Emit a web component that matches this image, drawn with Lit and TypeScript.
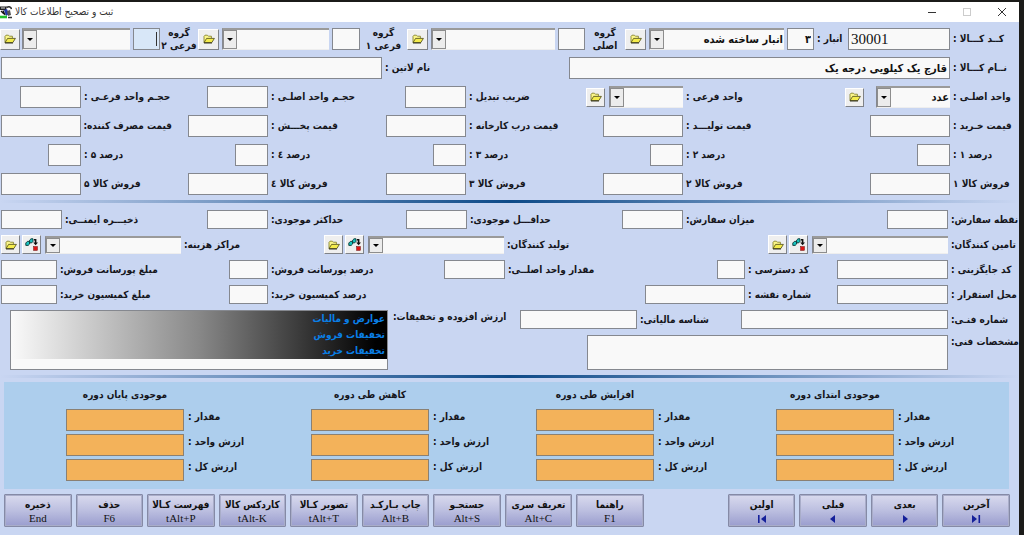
import { LitElement, html, css, svg } from "lit";
import { customElement } from "lit/decorators.js";

const folderIcon = html`<svg class="icon" viewBox="0 0 12 10" aria-hidden="true">
  ${svg`<path d="M1 8.5V2.2L2 1.2H4.4L5.4 2.2H8.4V4" fill="#fbf68a" stroke="#7c7a22" stroke-width=".8"/>
  <path d="M1 8.6L3.6 4.4H11.4L8.8 8.6Z" fill="#f4ec4c" stroke="#4c4a14" stroke-width=".8"/>
  <path d="M1 9H9" stroke="#1c1c08" stroke-width=".8"/>`}
</svg>`;

const treeIcon = html`<svg class="icon wide" viewBox="0 0 13 13" aria-hidden="true">
  ${svg`<path d="M.8 5L2.4 3.4H4.6V6L3.2 7.4H.8Z" fill="#19c5c0" stroke="#0a3634" stroke-width=".9"/>
  <path d="M4.6 2.2L6 .8H8V3.4L6.8 4.8H4.6Z" fill="#19c5c0" stroke="#0a3634" stroke-width=".9"/>
  <path d="M9 1.8H10.6V5" fill="none" stroke="#111" stroke-width="1.6"/>
  <path d="M8.2 4.4H13L10.6 7.2Z" fill="#111"/>
  <rect x="8.6" y="8.6" width="3.8" height="3.8" fill="#e01616" stroke="#6b0a0a" stroke-width=".5"/>`}
</svg>`;

const appIcon = html`<svg class="app-icon" viewBox="0 0 12 13" aria-hidden="true">
  ${svg`<path d="M0 .5H7L6 4H0Z" fill="#222"/><path d="M1 2H5" stroke="#ddd"/>
  <path d="M4 4L7 3L9 8L6 10Z" fill="#2438a8"/><path d="M7 1.5C9 0 11 1 11.5 3" fill="none" stroke="#333" stroke-width="1.6"/>
  <path d="M7 5L10 4L11 9L8 10Z" fill="#555"/><path d="M1 5L4 8M3 4.6L5 9" stroke="#111" stroke-width="1.3"/>
  <path d="M0 11H7" stroke="#21c02c" stroke-width="2.6"/><path d="M8 11.5H12" stroke="#333" stroke-width="1.5"/>`}
</svg>`;

const navGlyph: Record<string, unknown> = {
  last: svg`<path d="M1 1L6 5L1 9Z"/><rect x="7.5" y="1" width="1.6" height="8"/>`,
  next: svg`<path d="M3 1L8 5L3 9Z"/>`,
  prev: svg`<path d="M7 1L2 5L7 9Z"/>`,
  first: svg`<path d="M9 1L4 5L9 9Z"/><rect x="1" y="1" width="1.6" height="8"/>`,
};

const NAV = [
  ["آخرین", "last"],
  ["بعدی", "next"],
  ["قبلی", "prev"],
  ["اولین", "first"],
];

const ACTIONS = [
  ["راهنما", "F1"],
  ["تعریف سری", "Alt+C"],
  ["جستجـو", "Alt+S"],
  ["چاپ بـارکـد", "Alt+B"],
  ["تصویر کـالا", "tAlt+T"],
  ["کاردکس کالا", "tAlt-K"],
  ["فهرست کـالا", "tAlt+P"],
  ["حذف", "F6"],
  ["ذخیره", "End"],
];

const STOCK = ["موجودی ابتدای دوره", "افزایش طی دوره", "کاهش طی دوره", "موجودی پایان دوره"];
const MEASURES = ["مقدار :", "ارزش واحد :", "ارزش کل :"];

@customElement("app-root")
export class AppRoot extends LitElement {
  static styles = css`
    :host {
      display: block;
      box-sizing: border-box;
      min-height: 100vh;
      padding: 2px 5px 0 0;
      background: #1b1b19;
      font-family: "DejaVu Sans Condensed", "DejaVu Sans", sans-serif;
      font-size: 10px;
      font-weight: 700;
      line-height: 14px;
      color: #16161c;
    }
    *, *::before, *::after { box-sizing: border-box; }
    .window {
      direction: rtl;
      display: flex;
      flex-direction: column;
      min-height: calc(100vh - 2px);
      background: #c9d6f2;
    }
    .titlebar {
      direction: ltr;
      display: flex;
      align-items: center;
      height: 20px;
      background: #fff;
      font-weight: 400;
      color: #333;
    }
    .app-icon { width: 12px; height: 13px; margin-right: 3px; }
    .title { flex: 1; margin: 0; font: inherit; text-align: left; }
    .caption {
      width: 35px;
      height: 20px;
      padding: 0;
      border: 0;
      background: none;
    }
    .caption svg { display: block; margin: auto; width: 10px; height: 10px; fill: none; stroke: #333; }
    .caption:disabled svg { stroke: #ccc; }

    form { display: flex; flex-direction: column; flex: 1; }
    .section { display: flex; flex-direction: column; gap: 7px; padding-top: 6px; }
    .section.dense { gap: 6px; padding-top: 7px; }
    .row { display: grid; align-items: center; min-height: 22px; }
    .dense .row { min-height: 19px; }
    .identity { grid-template-columns: 69fr 102fr 34fr 27fr 138fr 24fr 40fr 27fr 127fr 24fr 47fr 28fr 110fr 24fr 38fr 27fr 111fr 22fr; }
    .names { grid-template-columns: 69fr 381fr 187fr 381fr 1fr; }
    .five { grid-template-columns: 69fr 180fr 87fr 123fr 94fr 98fr 100fr 96fr 91fr 81fr; }
    .order { grid-template-columns: 71fr 61fr 204fr 61fr 155fr 61fr 138fr 61fr 145fr 61fr 1fr; }
    .partners { grid-template-columns: 71fr 180fr 264fr 180fr 143fr 181fr; }
    .codes { grid-template-columns: 71fr 111fr 92fr 28fr 212fr 61fr 176fr 39fr 172fr 56fr 1fr; }
    .places { grid-template-columns: 71fr 111fr 92fr 100fr 377fr 39fr 172fr 56fr 1fr; }
    .row > *, .pair > * { min-width: 0; }

    label, .caption-text { display: block; text-align: left; padding-left: 3px; white-space: nowrap; }
    .stacked { text-align: center; padding: 0; margin: -2px 0; line-height: 13px; }
    input, textarea, select {
      display: block;
      width: 100%;
      height: 22px;
      margin: 0;
      padding: 0 2px;
      border: 1px solid #85888f;
      border-radius: 0;
      outline: 0;
      background: #f9f9f9;
      font: inherit;
      font-size: 11px;
      color: #111;
    }
    .dense input { height: 19px; }
    .w33 { width: 33px; }
    .w61 { width: 61px; }
    .w80 { width: 80px; }
    .code { direction: ltr; font-family: "Liberation Serif", serif; font-weight: 400; font-size: 15px; }
    .current { background: linear-gradient(#333, #333) calc(100% - 2px) 3px / 1px 14px no-repeat #d8e7f8; }

    .combo { position: relative; display: block; flex: none; }
    .row > .combo { margin-right: 3px; }
    .combo select {
      appearance: none;
      padding: 0 1px 0 16px;
      border: 0;
      border-top: 2px solid #9a9a9a;
      border-left: 1px solid #85888f;
      border-bottom: 1px solid #eee;
    }
    .combo::after {
      content: "";
      position: absolute;
      left: 1px;
      top: 2px;
      bottom: 1px;
      width: 14px;
      pointer-events: none;
      border: 1px solid #8d8d8d;
      background: url('data:image/svg+xml,<svg xmlns="http://www.w3.org/2000/svg" viewBox="0 0 6 3"><path d="M0 0H6L3 3Z"/></svg>') 50% 50% / 6px 3px no-repeat #ececec;
    }
    .dense .combo select { height: 18px; }
    .unit { width: 74px; }
    .partner { width: 136px; }
    .pair { display: flex; align-items: center; gap: 2px; }
    .pair .combo { margin-left: 2px; }
    .pair.loose .combo { margin-left: 10px; }
    .tool {
      display: grid;
      place-items: center;
      flex: none;
      width: 19px;
      height: 19px;
      padding: 0;
      border: 1px solid;
      border-color: #fff #7f8288 #7f8288 #fff;
      background: #efefef;
    }
    .identity .tool { width: 21px; height: 21px; justify-self: end; }
    .identity .tool:last-child { justify-self: start; margin-right: 2px; width: 20px; }
    .icon { display: block; width: 12px; height: 10px; }
    .icon.wide { width: 13px; height: 13px; }

    .rule {
      height: 3px;
      margin: 5px 0 0;
      border: 0;
      background: linear-gradient(90deg, transparent, #0d4a88 50%, transparent);
    }
    .technical { display: grid; grid-template-columns: 499fr 132fr 378fr 10fr; }
    .technical > * { min-width: 0; }
    .details { display: flex; flex-direction: column; gap: 6px; }
    .numbers { grid-template-columns: 71fr 207fr 104fr 117fr; }
    .spec { grid-template-columns: 71fr 361fr 67fr; align-items: start; }
    textarea { height: 35px; resize: none; }
    .adjust { padding-left: 5px; }
    .list {
      margin: 0;
      padding: 0;
      border: 1px solid #85888f;
      background: #f9f9f9;
      list-style: none;
    }
    .list li {
      height: 16px;
      padding: 0 2px;
      line-height: 16px;
      color: #0a7fe6;
      background: linear-gradient(90deg, #fafafa, #888 50%, #000 97%);
    }

    .stock {
      display: grid;
      grid-template-columns: 115fr 118fr 122fr 118fr 107fr 118fr 127fr 118fr 62fr;
      grid-template-rows: 20px repeat(3, 22px);
      row-gap: 3px;
      margin: 4px 10px 0 4px;
      padding: 4px 0 8px;
      background: #adceed;
    }
    .stock > * { min-width: 0; }
    .stock h2 { margin: 0; font: inherit; text-align: center; line-height: 18px; white-space: nowrap; }
    .stock label { padding: 1px 0 0 4px; }
    .stock input { background: #f3b25a; border-color: #8a8073; }

    .actions { display: flex; gap: 4px; padding: 5px 9px 6px 4px; }
    .action {
      display: flex;
      flex-direction: column;
      align-items: center;
      justify-content: center;
      flex: 67 1 0;
      min-width: 0;
      height: 33px;
      padding: 0;
      border: 1px solid #858aa6;
      border-radius: 1px;
      box-shadow: inset 0 0 0 1px #a9adc9;
      background: linear-gradient(#d9daee, #bcbfe0 50%, #9a9dce);
      font: inherit;
      color: #111;
      white-space: nowrap;
    }
    .gap { flex: 78 1 0; }
    .key { direction: ltr; font-family: "Liberation Serif", serif; font-size: 11px; font-weight: 400; line-height: 12px; }
    .nav { width: 10px; height: 10px; margin-top: 2px; fill: #15209a; }
  `;

  private text(id: string, label: string, size = "") {
    return html`<label for=${id}>${label}</label><input id=${id} class=${size}>`;
  }

  private combo(id: string, name: string, size = "", value = "") {
    return html`<span class="combo ${size}"><select id=${id} aria-label=${name}><option>${value}</option></select></span>`;
  }

  private tool(name: string, icon = folderIcon) {
    return html`<button type="button" class="tool" aria-label=${name}>${icon}</button>`;
  }

  private group(id: string, first: string, second: string, current = false) {
    return html`
      <label class="stacked" for=${id}>${first}<br>${second}</label>
      <input id=${id} class=${current ? "current" : ""}>
      ${this.combo(id + "-list", `${first} ${second}`)}
      ${this.tool("انتخاب")}`;
  }

  private partner(id: string, label: string) {
    return html`<label for=${id}>${label}</label>
      <span class="pair">${this.combo(id, label, "partner")}${this.tool("افزودن", treeIcon)}${this.tool("انتخاب")}</span>`;
  }

  private series(prefix: string, labels: string[], size: string, tracks = "five") {
    return html`<div class="row ${tracks}">${labels.map((l, i) => this.text(prefix + i, l, size))}</div>`;
  }

  render() {
    return html`<main class="window">
      <header class="titlebar">
        ${appIcon}
        <h1 class="title" dir="rtl">ثبت و تصحیح اطلاعات کالا</h1>
        <button class="caption" aria-label="کوچک کردن"><svg viewBox="0 0 10 10"><path d="M1 5.5H9"/></svg></button>
        <button class="caption" aria-label="بزرگ کردن" disabled><svg viewBox="0 0 10 10"><rect x="1.5" y="1.5" width="7" height="7"/></svg></button>
        <button class="caption" aria-label="بستن"><svg viewBox="0 0 10 10"><path d="M1 1L9 9M9 1L1 9"/></svg></button>
      </header>
      <form>
        <div class="section">
          <div class="row identity">
            <label for="code">کــد کـــالا :</label><input id="code" class="code" value="30001">
            <label for="store">انبار :</label><input id="store" value="۳">
            ${this.combo("store-list", "انبار", "", "انبار ساخته شده")}
            ${this.tool("انتخاب")}
            ${this.group("main-group", "گروه", "اصلی")}
            ${this.group("sub-group-1", "گروه", "فرعی ۱")}
            ${this.group("sub-group-2", "گروه", "فرعی ۲", true)}
          </div>
          <div class="row names">
            <label for="name">نــام کـــالا :</label><input id="name" value="قارچ یک کیلویی درجه یک">
            ${this.text("latin", "نام لاتین :")}
          </div>
          <div class="row five">
            <label for="unit">واحد اصلـی :</label>
            <span class="pair loose">${this.combo("unit", "واحد اصلی", "unit", "عدد")}${this.tool("انتخاب")}</span>
            <label for="sub-unit">واحد فرعی :</label>
            <span class="pair">${this.combo("sub-unit", "واحد فرعی", "unit")}${this.tool("انتخاب")}</span>
            ${this.text("ratio", "ضریب تبدیل :", "w61")}
            ${this.text("volume", "حجـم واحد اصلـی :", "w61")}
            ${this.text("sub-volume", "حجـم واحد فرعـی :", "w61")}
          </div>
          ${this.series("price", ["قیمت خـرید :", "قیمت تولیـــد :", "قیمت درب کارخانه :", "قیمت پخـــش :", "قیمت مصرف کننده:"], "w80")}
          ${this.series("percent", ["درصد ۱ :", "درصد ۲ :", "درصد ۳ :", "درصد ٤ :", "درصد ۵ :"], "w33")}
          ${this.series("sale", ["فروش کالا ۱", "فروش کالا ۲", "فروش کالا ۳", "فروش کالا ٤", "فروش کالا ۵"], "w80")}
        </div>
        <hr class="rule">
        <div class="section dense">
          ${this.series("order", ["نقطه سفارش:", "میزان سفارش:", "حداقـــل موجودی:", "حداکثر موجودی:", "ذخیـــره ایمنــی:"], "", "order")}
          <div class="row partners">
            ${this.partner("suppliers", "تامین کنندگان:")}
            ${this.partner("producers", "تولید کنندگان:")}
            ${this.partner("centers", "مراکز هزینه:")}
          </div>
          <div class="row codes">
            ${this.text("alt-code", "کد جایگزینی :")}
            ${this.text("access", "کد دسترسی :")}
            ${this.text("main-qty", "مقدار واحد اصلــی:")}
            ${this.text("sale-pct", "درصد پورسانت فروش:")}
            ${this.text("sale-amt", "مبلغ پورسانت فروش:")}
          </div>
          <div class="row places">
            ${this.text("place", "محل استقرار :")}
            ${this.text("map", "شماره نقشه :")}
            ${this.text("buy-pct", "درصد کمیسیون خرید:")}
            ${this.text("buy-amt", "مبلغ کمیسیون خرید:")}
          </div>
          <div class="technical">
            <div class="details">
              <div class="row numbers">
                ${this.text("tech-no", "شماره فنـی:")}
                ${this.text("tax-id", "شناسه مالیاتی:")}
              </div>
              <div class="row spec">
                <label for="spec">مشخصات فنی:</label><textarea id="spec"></textarea>
              </div>
            </div>
            <span class="caption-text adjust" id="adjust">ارزش افزوده و تخفیفات:</span>
            <ul class="list" role="listbox" aria-labelledby="adjust">
              ${["عوارض و مالیات", "تخفیفات فروش", "تخفیفات خرید"].map(
                (t) => html`<li role="option" aria-selected="true">${t}</li>`
              )}
            </ul>
          </div>
        </div>
        <hr class="rule">
        <section class="stock">
          <span></span>
          ${STOCK.map((t) => html`<h2>${t}</h2><span></span>`)}
          ${MEASURES.map(
            (m, r) => html`${STOCK.map((_, c) => this.text(`stock-${r}-${c}`, m))}<span></span>`
          )}
        </section>
        <div class="actions">
          ${NAV.map(
            ([t, g]) => html`<button type="button" class="action">${t}<svg class="nav" viewBox="0 0 10 10" aria-hidden="true">${navGlyph[g]}</svg></button>`
          )}
          <span class="gap"></span>
          ${ACTIONS.map(
            ([t, k]) => html`<button type="button" class="action">${t}<span class="key">${k}</span></button>`
          )}
        </div>
      </form>
    </main>`;
  }
}
